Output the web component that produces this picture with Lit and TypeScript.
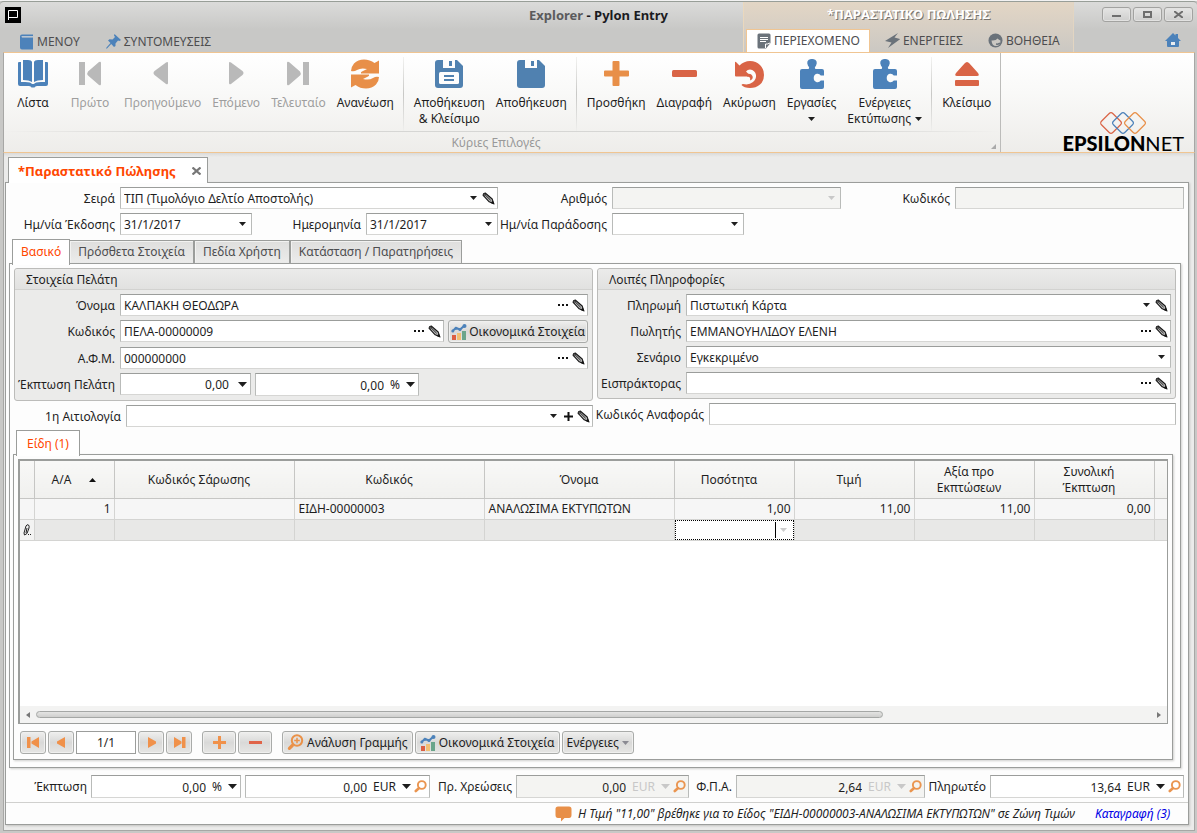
import { LitElement, html, svg, css, nothing } from "lit";

const BLUE = "#4c82ba";
const ORANGE = "#e88f48";
const RED = "#d96446";
const GREY = "#b9b9b9";
const SLATE = "#6a727a";

const icon = (w: number, h: number, box: string, body: unknown) =>
  html`<svg width=${w} height=${h} viewBox=${box} aria-hidden="true">${body}</svg>`;

const puzzle = svg`<path fill=${BLUE} d="M2 12q0-2 2-2h6.5q1.500-1.200-.5-3.200q-2.500-5.800 3-6.800h2q5.500 1 3 6.800q-2 2-.5 3.200H24q2 0 2 2v4.500h-3.200q-1.500-2.200-4-1.700a4.400 4.400 0 0 0 0 8.400q2.500.5 4-1.700H26V28q0 2-2 2H4q-2 0-2-2z"/>`;
const floppyTop = svg`<path fill="#5081b0" d="M4 1H23L29 7V26Q29 29 26 29H4Q1 29 1 26V4Q1 1 4 1Z"/><path fill="#fdfdfd" d="M9 0H21V9H9Z"/><path fill="#5081b0" d="M15 2H18V7H15Z"/>`;
const arrowArc = "M1 12Q1 8 4 4.500Q8 .5 14 .5Q20 .5 24.500 4L29 1.500V14.500H11Q10.500 13 12 12.500L17 10Q11 8.500 7 11Q4 13 1 12Z";

const big: Record<string, unknown> = {
  book: icon(32, 30, "0 0 32 30", svg`<g fill=${BLUE}><path d="M6 1H11Q14.500 1 15 3V23Q12 21 6 21Z"/><path d="M26 1H21Q17.500 1 17 3V23Q20 21 26 21Z"/><path d="M1 4Q1 3 2 3H4V23H8Q14 23 15 25H17Q18 23 24 23H28V3H30Q31 3 31 4V25Q31 27 29 27H20Q18 27 17.500 28.500H14.500Q14 27 12 27H3Q1 27 1 25Z"/></g>`),
  first: icon(30, 30, "0 0 30 30", svg`<path fill=${GREY} d="M4 3H10V26H4ZM26 4V25Q26 27 24 26L13 16.500Q11.500 14.500 13 12.500L24 3Q26 2 26 4Z"/>`),
  prev: icon(30, 30, "0 0 30 30", svg`<path fill=${GREY} d="M20 4V24Q20 26 18 25L6.500 16Q4.500 14 6.500 12L18 3.500Q20 2.500 20 4Z"/>`),
  next: icon(30, 30, "0 0 30 30", svg`<path fill=${GREY} d="M8 4V24Q8 26 10 25L21.500 16Q23.500 14 21.500 12L10 3.500Q8 2.500 8 4Z"/>`),
  last: icon(30, 30, "0 0 30 30", svg`<path fill=${GREY} d="M26 3H20V26H26ZM4 4V25Q4 27 6 26L17 16.500Q18.500 14.500 17 12.500L6 3Q4 2 4 4Z"/>`),
  refresh: icon(30, 30, "0 0 30 30", svg`<g fill=${ORANGE}><path d=${arrowArc}/><path transform="rotate(180 15 15)" d=${arrowArc}/></g>`),
  saveClose: icon(30, 30, "0 0 30 30", svg`${floppyTop}<rect x="5" y="13" width="20" height="12" rx="1.500" fill="#fdfdfd"/><path stroke="#5081b0" stroke-width="2" d="M10 17H20M10 21H20"/>`),
  save: icon(30, 30, "0 0 30 30", floppyTop),
  plus: icon(30, 30, "0 0 30 30", svg`<path fill=${ORANGE} d="M12.500 2H17.500Q18.500 2 18.500 3V11.500H27Q28 11.500 28 12.500V16.500Q28 17.500 27 17.500H18.500V26Q18.500 27 17.500 27H12.500Q11.500 27 11.500 26V17.500H4Q3 17.500 3 16.500V12.500Q3 11.500 4 11.500H11.500V3Q11.500 2 12.500 2Z"/>`),
  minus: icon(30, 30, "0 0 30 30", svg`<rect x="3" y="11" width="25" height="7" rx="1.500" fill=${RED}/>`),
  undo: icon(30, 30, "0 0 30 30", svg`<path fill=${RED} d="M1 3.500Q1 2.500 2 3L5.500 6.500Q10 2 16 2Q22 2 26 6Q30 10 30 16Q30 22 26 25.500Q22 29 16 29Q10 29 7.500 26Q8 25 9 25Q15 26.500 19 23Q22.500 20 22 16Q21 11 16 10.500Q13.500 10.500 12 12.500L15.500 16Q16 17 14.500 17.500H2Q1 17.500 1 16.500Z"/><path fill=${RED} d="M13 15Q17 14 18.500 17Q19.500 20 16 21.500Q17 17.500 13 17.500Z"/>`),
  puzzle: icon(28, 30, "0 0 28 30", puzzle),
  eject: icon(30, 30, "0 0 30 30", svg`<g fill=${RED}><path d="M4 14L12.500 4.500Q15 1.500 17.500 4.500L26 14Q28 17 25 17H5Q2 17 4 14Z"/><rect x="3" y="21" width="24" height="6" rx="1"/></g>`),
};

const caret = (cls = "") =>
  html`<svg class="caret ${cls}" width="7" height="4" viewBox="0 0 7 4" aria-hidden="true"><path fill="currentColor" d="M0 0H7L3.500 4Z"/></svg>`;
const bigCaret = html`<svg width="9" height="5" viewBox="0 0 9 5" aria-hidden="true"><path fill="currentColor" d="M0 0H9L4.500 5Z"/></svg>`;
const pencil = icon(13, 13, "0 0 13 13", svg`<path fill="#b5b5b5" stroke="#161616" stroke-width="1.100" stroke-linejoin="round" d="M1 3.200Q1.200 1.300 3.200 1L10.200 7L11.800 11.800L7.200 9.800Z"/><path stroke="#161616" stroke-width=".9" d="M2.600 2.300L8.600 8.200M1.600 3.800L4 1.700"/><path fill="#161616" d="M8.600 11L10.800 8.400L12.500 12.500Z"/>`);
const dots = icon(11, 3, "0 0 11 3", svg`<path fill="#111" d="M0 0H2V2H0ZM4 0H6V2H4ZM8 0H10V2H8Z"/>`);
const addMark = icon(9, 9, "0 0 9 9", svg`<path fill="#111" d="M3.500 0H5.500V3.500H9V5.500H5.500V9H3.500V5.500H0V3.500H3.500Z"/>`);
const lens = icon(13, 13, "0 0 13 13", svg`<circle cx="7.800" cy="5" r="3.900" fill="none" stroke="#ea9550" stroke-width="1.900"/><path stroke="#ea9550" stroke-width="2.600" stroke-linecap="round" d="M4.800 8.200L1.800 11"/>`);
const chart = icon(16, 16, "0 0 16 16", svg`<path fill="#dc5f43" d="M1 11H5V16H1Z"/><path fill="#f2bf73" d="M6 9H10V16H6Z"/><path fill="#6aa58b" d="M11 7H15V16H11Z"/><path fill="none" stroke="#4c82ba" stroke-width="2" d="M1.500 7L5 4L9 5.500L13 2"/><circle cx="13.500" cy="2" r="2" fill="#4c82ba"/><circle cx="5" cy="4.300" r="1.500" fill="#4c82ba"/><circle cx="1.800" cy="7" r="1.500" fill="#4c82ba"/><circle cx="9" cy="5.500" r="1.500" fill="#4c82ba"/>`);
const zoomLine = icon(17, 17, "0 0 17 17", svg`<circle cx="10" cy="6.500" r="5.200" fill="none" stroke="#ea9148" stroke-width="2"/><path stroke="#ea9148" stroke-width="1.500" d="M10 3.700V9.300M7.200 6.500H12.800"/><path stroke="#ea9148" stroke-width="3.200" stroke-linecap="round" d="M5.300 11.500L2.400 14.400"/>`);

const nav = {
  first: icon(13, 13, "0 0 13 13", svg`<path fill="#f0914a" d="M0 1H3.500V12H0ZM12 1V12L4.500 7.500V5.500Z"/>`),
  prev: icon(13, 13, "0 0 13 13", svg`<path fill="#f0914a" d="M10 1V12L2 7.500V5.500Z"/>`),
  next: icon(13, 13, "0 0 13 13", svg`<path fill="#f0914a" d="M3 1V12L11 7.500V5.500Z"/>`),
  last: icon(13, 13, "0 0 13 13", svg`<path fill="#f0914a" d="M12.500 1H9V12H12.500ZM1 1V12L8.500 7.500V5.500Z"/>`),
  add: icon(13, 13, "0 0 13 13", svg`<path fill="#f0914a" d="M5 0H8V5H13V8H8V13H5V8H0V5H5Z"/>`),
  remove: icon(13, 13, "0 0 13 13", svg`<path fill="#e06448" d="M0 5H13V8H0Z"/>`),
};

type RibbonItem = { lines: string[]; glyph: string; disabled?: boolean; menu?: boolean };
const ribbon: RibbonItem[][] = [
  [
    { lines: ["Λίστα"], glyph: "book" },
    { lines: ["Πρώτο"], glyph: "first", disabled: true },
    { lines: ["Προηγούμενο"], glyph: "prev", disabled: true },
    { lines: ["Επόμενο"], glyph: "next", disabled: true },
    { lines: ["Τελευταίο"], glyph: "last", disabled: true },
    { lines: ["Ανανέωση"], glyph: "refresh" },
  ],
  [
    { lines: ["Αποθήκευση", "& Κλείσιμο"], glyph: "saveClose" },
    { lines: ["Αποθήκευση"], glyph: "save" },
  ],
  [
    { lines: ["Προσθήκη"], glyph: "plus" },
    { lines: ["Διαγραφή"], glyph: "minus" },
    { lines: ["Ακύρωση"], glyph: "undo" },
    { lines: ["Εργασίες", ""], glyph: "puzzle", menu: true },
    { lines: ["Ενέργειες", "Εκτύπωσης"], glyph: "puzzle", menu: true },
  ],
  [{ lines: ["Κλείσιμο"], glyph: "eject" }],
];

const columns = ["Α/Α", "Κωδικός Σάρωσης", "Κωδικός", "Όνομα", "Ποσότητα", "Τιμή", "Αξία προ Εκπτώσεων", "Συνολική Έκπτωση"];
const lines = [["1", "", "ΕΙΔΗ-00000003", "ΑΝΑΛΩΣΙΜΑ ΕΚΤΥΠΩΤΩΝ", "1,00", "11,00", "11,00", "0,00"]];
const numeric = new Set([0, 4, 5, 6, 7]);
const filterable = new Set([1, 4, 5, 6, 7]);

type FieldOptions = { tools?: unknown; suffix?: string; disabled?: boolean; number?: boolean; cls?: string };

class AppRoot extends LitElement {
  static styles = css`
    :host {
      display: block;
      font: 12px/16px "Noto Sans", "DejaVu Sans", sans-serif;
      color: #1e1e1e;
    }
    * { box-sizing: border-box; }
    svg { display: block; flex: none; }
    button, input, select { font: inherit; color: inherit; margin: 0; padding: 0; border: 0; background: none; border-radius: 0; }
    button { cursor: default; }
    a { color: inherit; text-decoration: none; }

    .window {
      display: flex;
      flex-direction: column;
      min-height: 100vh;
      padding: 0 2px 2px 3px;
      background: #c8c8c6;
      border-top: 1px solid #f2f2f2;
    }
    .title-bar {
      display: flex;
      height: 51px;
      margin: 0 -2px 0 -3px;
      padding: 0 4px;
      border-top: 1px solid #989e98;
      border-radius: 4px 4px 0 0;
      background: linear-gradient(#dbdbda, #c8c8c6 55%);
    }
    .title-main { flex: 1; display: flex; flex-direction: column; justify-content: space-between; }
    .title-row { display: flex; justify-content: space-between; align-items: center; height: 26px; padding: 0 75px 0 1px; }
    .title { font-size: 13px; font-weight: bold; color: #1b1b1f; }
    .title-app { color: #5b5b5d; }
    .tab-row { display: flex; align-items: center; height: 22px; color: #4d4d4f; padding-top: 1px; }
    .ribbon-link { display: flex; align-items: center; gap: 3px; white-space: nowrap; height: 22px; }
    .left-links { padding-left: 15px; gap: 26px; }
    .context { width: 331px; display: flex; flex-direction: column; justify-content: space-between; background: linear-gradient(#e3d6c5, #cbc8c3); border-left: 1px solid #ead8bd; border-right: 1px solid #e2d5c2; }
    .context-title { height: 24px; line-height: 24px; text-align: center; color: #fff; font-size: 13px; font-weight: bold; text-shadow: 1px 1px 0 #77746f; }
    .context .tab-row { padding-left: 2px; height: 24px; }
    .active-link { background: #fff; border: 1px solid #f0c592; border-bottom: 0; height: 24px; padding: 0 9px 0 10px; margin-right: 15px; }
    .active-link + .ribbon-link { margin-right: 25px; }
    .window-tools { width: 119px; display: flex; flex-direction: column; justify-content: space-between; align-items: flex-end; padding-top: 5px; }
    .window-buttons { display: flex; gap: 2px; }
    .window-buttons button { width: 29px; height: 15px; border: 1px solid #a2a2a0; border-radius: 3px; background: linear-gradient(#e5e5e4, #cececd); display: grid; place-items: center; box-shadow: inset 0 0 0 1px #e2e2e1; }
    .home { padding: 0 12px 4px 0; }

    .ribbon { display: flex; height: 101px; border: 1px solid #f0c592; border-left-color: #a7a7a5; border-right-color: #a7a7a5; background: linear-gradient(#fff, #f9f9f8 40%, #eeedea); justify-content: space-between; }
    .ribbon-main { flex: 0 1 997px; display: flex; flex-direction: column; border-right: 1px solid #bcbcba; }
    .ribbon-groups { display: flex; height: 78px; padding: 4px 0 0 1px; }
    .ribbon-group { display: flex; gap: 1px; }
    .ribbon-group + .ribbon-group { border-left: 1px solid; border-image: linear-gradient(#f4f4f2, #c8c8c6, #f0f0ee) 1; padding-left: 5px; }
    .ribbon-group:not(:last-child) { padding-right: 4px; }
    .ribbon-button { display: flex; flex-direction: column; align-items: center; min-width: 56px; padding: 2px 5px 0; white-space: nowrap; text-align: center; }
    .ribbon-button svg { margin-bottom: 6px; }
    .ribbon-button .line { display: flex; align-items: center; justify-content: center; gap: 4px; height: 16px; }
    .ribbon-button .line svg { margin: 0; }
    .ribbon-button:disabled { color: #9e9e9e; }
    .ribbon-caption { flex: 1; display: grid; grid-template-columns: 1fr auto 1fr; align-items: center; padding: 2px 4px 0 0; color: #999; border-top: 1px solid; border-image: linear-gradient(90deg, transparent, #d6d6d4 15%, #d6d6d4 85%, transparent) 1; }
    .ribbon-caption svg { justify-self: end; margin-top: 6px; }
    .caption-text { margin-right: 8px; grid-column: 2; }
    .brand { display: flex; flex-direction: column; align-items: center; justify-content: flex-end; padding-right: 10px; }
    .brand-name { font: 900 20px/17px "Lato", sans-serif; color: #000; }
    .brand-light { font-weight: 400; }

    .workspace { flex: 1; display: flex; flex-direction: column; background: linear-gradient(#dadad9, #ebebea 4px); padding: 4px 5px 5px 1px; border: 1px solid #a7a7a5; border-top: 0; }
    .doc-tabs { display: flex; padding-left: 3px; }
    .doc-tab { display: flex; align-items: center; justify-content: space-between; width: 200px; height: 26px; padding: 0 6px 0 9px; background: #fff; border: 1px solid #9b9d9b; border-bottom: 0; margin-bottom: -1px; color: #ff4700; font-size: 13px; font-weight: bold; z-index: 1; }
    .document { flex: 1; display: flex; flex-direction: column; background: #fdfdfd; border: 1px solid #9b9d9b; box-shadow: 1px 1px 2px #c4c4c2; padding: 4px 0 0; }

    .head-grid { display: grid; grid-template-columns: 109px 132fr 104px 132fr 104px 132fr 92fr 104px 229fr; gap: 4px 5px; padding-right: 4px; }
    label { display: flex; align-items: center; justify-content: flex-end; text-align: right; white-space: nowrap; padding-top: 1px; }
    .span-3 { grid-column: span 3; }
    .span-2 { grid-column: span 2; }
    .field { display: flex; align-items: center; min-width: 0; height: 22px; background: #fff; border: 1px solid #b9bbb9; border-top-color: #9b9d9b; border-bottom-color: #d6d6d4; padding: 0 1px 0 3px; }
    .field input, .field select { flex: 1; min-width: 0; width: 100%; height: 20px; outline: none; appearance: none; opacity: 1; padding-top: 1px; }
    .field .number { text-align: right; }
    .field.off { background: #f4f4f2; }
    .field.off .suffix, .field.off .caret-button { color: #c8c8c8; }
    .suffix { margin-left: 6px; padding-top: 1px; }
    .field button { display: grid; place-items: center; height: 20px; min-width: 15px; }
    .caret { margin: 0 4px; pointer-events: none; }
    .field .caret-button { min-width: 14px; margin-left: 3px; }
    .field.tall { height: 23px; }

    .tabs { display: flex; align-items: flex-end; padding-left: 6px; margin-top: 4px; }
    .tab { height: 24px; padding: 0 8px; border: 1px solid #9b9d9b; background: linear-gradient(#dededd, #ececeb); color: #4d4d4f; margin-right: -1px; box-shadow: inset 1px 1px 0 #f2f2f1; white-space: nowrap; }
    .tab + .tab + .tab { margin-left: 1px; }
    .tab.active { height: 26px; background: #fff; color: #ff4700; border-bottom: 0; margin-bottom: -1px; padding-bottom: 1px; z-index: 1; box-shadow: none; }
    .panel { flex: 1; display: flex; flex-direction: column; margin: -1px 7px 0 3px; border: 1px solid #9b9d9b; box-shadow: 1px 1px 2px #cfcfcd; padding: 4px 4px 7px 4px; }

    .groups { display: grid; grid-template-columns: 579fr 579fr; column-gap: 4px; align-items: start; }
    .column { display: flex; flex-direction: column; gap: 4px; min-width: 0; }
    .box { background: #ebebea; border: 1px solid #bcbcba; border-radius: 3px; margin: 0; }
    .box-title { height: 21px; line-height: 22px; padding-left: 11px; background: linear-gradient(#ebebea, #e1e1e0); border-bottom: 1px solid #d2d2d0; border-radius: 3px 3px 0 0; margin: 0; font-size: 12px; font-weight: normal; }
    .box-body { display: grid; row-gap: 4px; padding: 4px 4px 4px 0; }
    .row { display: grid; grid-template-columns: 100px 1fr; column-gap: 5px; }
    .box-right .row { grid-template-columns: 83px 1fr; }
    .cells { display: flex; align-items: flex-start; gap: 4px; min-width: 0; }
    .cells .field { flex: 1; }
    .cells .discount { flex: 0 0 131px; }
    .cells .discount-rate { flex: 0 0 164px; }
    .row.reason { grid-template-columns: 107px 1fr; }
    .row.reference { grid-template-columns: 107px 1fr; }
    .push { display: flex; align-items: center; justify-content: center; gap: 3px; height: 23px; padding: 0 4px; border: 1px solid #a9aba9; border-radius: 3px; background: linear-gradient(#efefee, #d9d9d8 50%, #e6e6e4); box-shadow: inset 0 0 0 1px #f0f0ef; white-space: nowrap; }
    .cells .push { padding: 0 2px; gap: 2px; }

    .item-tabs { display: flex; padding-left: 2px; margin-top: 3px; }
    .item-tabs .tab.active { padding: 0 10px; }
    .items { flex: 1; display: flex; flex-direction: column; margin: -1px 3px 0 -1px; border: 1px solid #9b9d9b; box-shadow: 1px 1px 2px #cfcfcd; padding: 4px; gap: 7px; }
    .grid { flex: 1; display: flex; flex-direction: column; border: 1px solid #9b9d9b; border-top-width: 2px; border-left-width: 2px; background: #fff; overflow: hidden; }
    .grid-body { flex: 1; }
    table { width: 100%; border-collapse: collapse; table-layout: fixed; }
    th, td { border-right: 1px solid #d4d4d2; border-bottom: 1px solid #d4d4d2; padding: 1px 3px 0 4px; font-weight: normal; overflow: hidden; white-space: nowrap; }
    th { height: 37px; white-space: normal; background: linear-gradient(#f8f8f7, #f0f0ee); border-color: #c6c6c4; line-height: 16px; padding: 1px 16px 0; }
    th.filterable { padding-right: 26px; }
    td { height: 21px; background: #f6f6f6; }
    th:last-child, td:last-child { border-right: 0; padding: 0; }
    .entry td { background: #e8e8e7; padding: 0; }
    .entry .mark { background: #f3f3f2; }
    .num { text-align: right; }
    .sort { display: flex; align-items: center; justify-content: center; gap: 18px; }
    .c-mark { width: 14px; }
    .c-no { width: 80px; }
    .c-code, .c-name { width: 190px; }
    .c-scan { width: 180px; }
    .c-val { width: 120px; }
    .editor { display: flex; align-items: center; height: 20px; border: 1px dotted #000; background: #fff; color: #ccc; padding-right: 2px; }
    .editor input { flex: 1; min-width: 0; height: 16px; outline: none; text-align: right; color: #1e1e1e; border-right: 1px solid #000; }
    .scroll { display: flex; align-items: center; gap: 6px; height: 17px; padding: 0 6px; background: #f3f3f2; }
    .scroll-track { flex: 1; }
    .scroll-thumb { width: 76%; height: 7px; border: 1px solid #a5a7a5; border-radius: 4px; background: linear-gradient(#e4e4e3, #cfcfcd); }
    .toolbar { display: flex; gap: 2px; padding: 0 0 1px 2px; }
    .nav { width: 26px; padding: 0; }
    .wide { width: 34px; }
    .gap { margin-left: 8px; }
    .page { width: 60px; height: 23px; border: 1px solid #9b9d9b; background: #fff; text-align: center; outline: none; }

    .totals { display: grid; grid-template-columns: 80px 150fr 185fr 78px 173fr 39px 189fr 57px 194fr; column-gap: 4px; padding: 7px 4px 4px 1px; }
    .status { display: flex; align-items: center; justify-content: flex-end; height: 22px; border-top: 1px solid #d0d0ce; font-style: italic; padding: 1px 12px 0 0; }
    .status svg { margin-right: 6px; }
    .message { white-space: nowrap; margin-right: 7px; min-width: 510px; }
    .log { color: #0000e6; white-space: nowrap; min-width: 81px; }
  `;

  caretButton(name: string, disabled = false) {
    return html`<button class="caret-button" aria-label=${name} ?disabled=${disabled}>${caret()}</button>`;
  }

  edit() {
    return html`<button aria-label="Επεξεργασία">${pencil}</button>`;
  }

  browse() {
    return html`<button aria-label="Αναζήτηση">${dots}</button>${this.edit()}`;
  }

  field(id: string, value: string, o: FieldOptions = {}) {
    return html`<div class="field ${o.cls ?? ""} ${o.disabled ? "off" : ""}">
      <input id=${id} class=${o.number ? "number" : "plain"} .value=${value} ?readonly=${!!o.disabled} autocomplete="off" />
      ${o.suffix ? html`<span class="suffix">${o.suffix}</span>` : nothing}${o.tools ?? nothing}
    </div>`;
  }

  choice(id: string, value: string, tools: unknown = nothing, cls = "") {
    return html`<div class="field ${cls}">
      <select id=${id}><option>${value}</option></select>${caret()}${tools}
    </div>`;
  }

  amountTools(money: boolean, disabled = false) {
    return html`<button class="caret-button" aria-label="Υπολογισμός" ?disabled=${disabled}>${bigCaret}</button>${money
      ? html`<button aria-label="Ανάλυση">${lens}</button>`
      : nothing}`;
  }

  renderTitleBar() {
    return html`<header class="title-bar">
      <div class="title-main">
        <div class="title-row">
          ${icon(16, 16, "0 0 16 16", svg`<path fill="#000" d="M0 0H16V16H0Z"/><path fill="none" stroke="#fff" d="M3.500 13V3.500H12.500V10.500H4"/>`)}
          <div class="title"><span class="title-app">Explorer</span> - Pylon Entry</div>
        </div>
        <nav class="tab-row left-links">
          <a class="ribbon-link" href="#menu">${icon(15, 16, "0 0 15 16", svg`<path fill="#4c82ba" d="M3 0.500H14V2H3V3.500H14V15.500H3Q1 15.500 1 13.500V2.500Q1 .5 3 .5Z"/><path stroke="#b6c6d8" d="M2.500 2.700H13.500"/>`)}ΜΕΝΟΥ</a>
          <a class="ribbon-link" href="#shortcuts">${icon(15, 15, "0 0 15 15", svg`<path fill="#4c82ba" d="M8.500 0L15 6L13.500 7L12 6.500L9.500 9.500V12L8 13L5.200 10L1 14.500H0L.5 13.500L4.500 9L2 6.500L3.500 5.200L6.500 5.500L9 3L8 1.500Z"/>`)}ΣΥΝΤΟΜΕΥΣΕΙΣ</a>
        </nav>
      </div>
      <div class="context">
        <div class="context-title">*ΠΑΡΑΣΤΑΤΙΚΟ ΠΩΛΗΣΗΣ</div>
        <nav class="tab-row">
          <a class="ribbon-link active-link" href="#content">${icon(14, 16, "0 0 14 16", svg`<path fill=${SLATE} d="M2 .5H12Q13.500 .5 13.500 2V10L9 15.500H2Q.5 15.500 .5 14V2Q.5 .5 2 .5Z"/><path stroke="#fff" d="M3 4.500H11M3 6.500H11M3 8.500H9"/><path fill="none" stroke="#fff" d="M8.500 15V11Q10 11.500 13 10"/>`)}ΠΕΡΙΕΧΟΜΕΝΟ</a>
          <a class="ribbon-link" href="#actions">${icon(15, 15, "0 0 15 15", svg`<path fill=${SLATE} d="M13 0L9.500 4.500L15.500 6L3 15L6.500 9.500L0 8Z"/>`)}ΕΝΕΡΓΕΙΕΣ</a>
          <a class="ribbon-link" href="#help">${icon(15, 15, "0 0 15 15", svg`<circle cx="7.500" cy="7.500" r="7" fill=${SLATE}/><path fill="#cbc8c3" d="M3.500 7.500Q8 8 9.500 5.500Q11 7 12.500 7.500Q12.500 13 8 13Q4 13 3.500 7.500Z"/><path fill="none" stroke=${SLATE} stroke-width="1.500" d="M12 10Q11 11.500 8 11"/>`)}ΒΟΗΘΕΙΑ</a>
        </nav>
      </div>
      <div class="window-tools">
        <div class="window-buttons">
          <button aria-label="Ελαχιστοποίηση">${icon(9, 7, "0 0 9 7", svg`<path fill="#6e6e6e" d="M0 4H9V6H0Z"/>`)}</button>
          <button aria-label="Μεγιστοποίηση">${icon(9, 7, "0 0 9 7", svg`<path fill="none" stroke="#6e6e6e" stroke-width="2" d="M1 1H8V6H1Z"/>`)}</button>
          <button aria-label="Κλείσιμο παραθύρου">${icon(9, 7, "0 0 9 7", svg`<path stroke="#6e6e6e" stroke-width="2" d="M0 0L9 7M9 0L0 7"/>`)}</button>
        </div>
        <a class="home" href="#home" aria-label="Αρχική">${icon(16, 15, "0 0 16 15", svg`<path fill="#4c82ba" d="M8 0L10.500 2.500V1H13V5L16 8H14V13Q14 14 13 14H3Q2 14 2 13V8H0Z"/><path fill="#e8ecf0" d="M6 9H10V12H6Z"/>`)}</a>
      </div>
    </header>`;
  }

  renderRibbonButton(item: RibbonItem) {
    const last = item.lines.length - 1;
    return html`<button class="ribbon-button" ?disabled=${!!item.disabled}>
      ${big[item.glyph]}${item.lines.map(
        (text, i) => html`<span class="line">${text}${item.menu && i === last ? caret("menu") : nothing}</span>`,
      )}
    </button>`;
  }

  renderRibbon() {
    return html`<section class="ribbon">
      <div class="ribbon-main">
        <div class="ribbon-groups">
          ${ribbon.map((group) => html`<div class="ribbon-group">${group.map((item) => this.renderRibbonButton(item))}</div>`)}
        </div>
        <div class="ribbon-caption">
          <span class="caption-text">Κύριες Επιλογές</span>
          ${icon(5, 5, "0 0 5 5", svg`<path fill="#aaa" d="M5 0V5H0Z"/>`)}
        </div>
      </div>
      <div class="brand">
        ${icon(48, 24, "0 0 48 24", svg`<g fill="none" stroke-width="1.200"><rect x="4" y="4" width="16" height="16" rx="2.500" transform="rotate(45 12 12)" stroke="#d96446"/><rect x="16" y="4" width="16" height="16" rx="2.500" transform="rotate(45 24 12)" stroke="#4c82ba"/><rect x="28" y="4" width="16" height="16" rx="2.500" transform="rotate(45 36 12)" stroke="#e88f48"/></g>`)}
        <div class="brand-name">EPSILON<span class="brand-light">NET</span></div>
      </div>
    </section>`;
  }

  renderHead() {
    return html`<div class="head-grid">
      <label for="series">Σειρά</label>
      ${this.choice("series", "ΤΙΠ (Τιμολόγιο Δελτίο Αποστολής)", this.edit(), "span-3")}
      <label for="number">Αριθμός</label>
      ${this.field("number", "", { disabled: true, cls: "span-2", tools: this.caretButton("Επιλογή αριθμού", true) })}
      <label for="code">Κωδικός</label>
      ${this.field("code", "", { disabled: true })}
      <label for="issued">Ημ/νία Έκδοσης</label>
      ${this.field("issued", "31/1/2017", { tools: this.caretButton("Ημερολόγιο") })}
      <label for="date">Ημερομηνία</label>
      ${this.field("date", "31/1/2017", { tools: this.caretButton("Ημερολόγιο") })}
      <label for="delivery">Ημ/νία Παράδοσης</label>
      ${this.field("delivery", "", { tools: this.caretButton("Ημερολόγιο") })}
    </div>`;
  }

  renderBoxes() {
    return html`<div class="groups">
      <div class="column">
        <section class="box">
          <h2 class="box-title">Στοιχεία Πελάτη</h2>
          <div class="box-body">
            <div class="row"><label for="name">Όνομα</label>${this.field("name", "ΚΑΛΠΑΚΗ ΘΕΟΔΩΡΑ", { tools: this.browse() })}</div>
            <div class="row">
              <label for="customer">Κωδικός</label>
              <div class="cells">
                ${this.field("customer", "ΠΕΛΑ-00000009", { tools: this.browse() })}
                <button class="push">${chart}Οικονομικά Στοιχεία</button>
              </div>
            </div>
            <div class="row"><label for="vat">Α.Φ.Μ.</label>${this.field("vat", "000000000", { tools: this.browse() })}</div>
            <div class="row">
              <label for="discount">Έκπτωση Πελάτη</label>
              <div class="cells">
                ${this.field("discount", "0,00", { number: true, cls: "discount", tools: html`<span>&nbsp;</span>${this.amountTools(false)}` })}
                ${this.field("discount-rate", "0,00", { number: true, suffix: "%", cls: "discount-rate tall", tools: this.amountTools(false) })}
              </div>
            </div>
          </div>
        </section>
        <div class="row reason">
          <label for="reason">1η Αιτιολογία</label>
          ${this.choice("reason", "", html`<button aria-label="Προσθήκη">${addMark}</button>${this.edit()}`)}
        </div>
      </div>
      <div class="column">
        <section class="box box-right">
          <h2 class="box-title">Λοιπές Πληροφορίες</h2>
          <div class="box-body">
            <div class="row"><label for="payment">Πληρωμή</label>${this.choice("payment", "Πιστωτική Κάρτα", this.edit())}</div>
            <div class="row"><label for="seller">Πωλητής</label>${this.field("seller", "ΕΜΜΑΝΟΥΗΛΙΔΟΥ ΕΛΕΝΗ", { tools: this.browse() })}</div>
            <div class="row"><label for="scenario">Σενάριο</label>${this.choice("scenario", "Εγκεκριμένο")}</div>
            <div class="row"><label for="collector">Εισπράκτορας</label>${this.field("collector", "", { tools: this.browse() })}</div>
          </div>
        </section>
        <div class="row reference"><label for="reference">Κωδικός Αναφοράς</label>${this.field("reference", "")}</div>
      </div>
    </div>`;
  }

  renderTable() {
    const widths = ["c-no", "c-scan", "c-code", "c-name", "c-val", "c-val", "c-val", "c-val"];
    return html`<div class="grid">
      <div class="grid-body">
        <table>
          <colgroup><col class="c-mark" />${widths.map((w) => html`<col class=${w} />`)}<col /></colgroup>
          <thead>
            <tr>
              <th></th>
              ${columns.map((name, i) => i === 0
                ? html`<th><span class="sort">${name}<svg width="7" height="4" viewBox="0 0 7 4" aria-hidden="true"><path fill="#111" d="M0 4H7L3.500 0Z"/></svg></span></th>`
                : html`<th class=${filterable.has(i) ? "filterable" : "plain"}>${name}</th>`)}
              <th></th>
            </tr>
          </thead>
          <tbody>
            ${lines.map((line) => html`<tr><td></td>${line.map((cell, i) => html`<td class=${numeric.has(i) ? "num" : "text"}>${cell}</td>`)}<td></td></tr>`)}
            <tr class="entry">
              <td class="mark">${icon(14, 13, "1 0 14 13", svg`<path fill="none" stroke="#222" stroke-width="1" d="M5 10L7 3Q8 1 9.500 2Q10.500 3 10 5L8 10.500L5.500 12L5 10M8 5L7 10"/><path fill="#222" d="M9 11H10V12H9ZM11 11H12V12H11Z"/>`)}</td>
              ${columns.map((name, i) => i === 4
                ? html`<td><div class="editor"><input aria-label=${name} /><button aria-label="Υπολογισμός">${caret()}</button></div></td>`
                : html`<td></td>`)}
              <td></td>
            </tr>
          </tbody>
        </table>
      </div>
      <div class="scroll">
        ${icon(4, 6, "0 0 4 6", svg`<path fill="#777" d="M4 0V6L0 3Z"/>`)}
        <div class="scroll-track"><div class="scroll-thumb"></div></div>
        ${icon(4, 6, "0 0 4 6", svg`<path fill="#777" d="M0 0V6L4 3Z"/>`)}
      </div>
    </div>`;
  }

  renderToolbar() {
    return html`<div class="toolbar">
      <button class="push nav" aria-label="Πρώτη γραμμή">${nav.first}</button>
      <button class="push nav" aria-label="Προηγούμενη γραμμή">${nav.prev}</button>
      <input class="page" aria-label="Γραμμή" .value=${"1/1"} />
      <button class="push nav" aria-label="Επόμενη γραμμή">${nav.next}</button>
      <button class="push nav" aria-label="Τελευταία γραμμή">${nav.last}</button>
      <button class="push wide gap" aria-label="Προσθήκη γραμμής">${nav.add}</button>
      <button class="push wide" aria-label="Διαγραφή γραμμής">${nav.remove}</button>
      <button class="push gap">${zoomLine}Ανάλυση Γραμμής</button>
      <button class="push">${chart}Οικονομικά Στοιχεία</button>
      <button class="push">Ενέργειες<svg width="7" height="4" viewBox="0 0 7 4" aria-hidden="true"><path fill="#8a8a92" d="M0 0H7L3.500 4Z"/></svg></button>
    </div>`;
  }

  renderTotals() {
    const amount = (id: string, value: string, suffix: string, disabled = false) =>
      this.field(id, value, { number: true, suffix, disabled, cls: "tall", tools: this.amountTools(suffix === "EUR", disabled) });
    return html`<div class="totals">
      <label for="total-rate">Έκπτωση</label>${amount("total-rate", "0,00", "%")}
      ${amount("total-discount", "0,00", "EUR")}
      <label for="charges">Πρ. Χρεώσεις</label>${amount("charges", "0,00", "EUR", true)}
      <label for="tax">Φ.Π.Α.</label>${amount("tax", "2,64", "EUR", true)}
      <label for="payable">Πληρωτέο</label>${amount("payable", "13,64", "EUR")}
    </div>`;
  }

  render() {
    return html`<div class="window">
      ${this.renderTitleBar()} ${this.renderRibbon()}
      <main class="workspace">
        <div class="doc-tabs">
          <div class="doc-tab">*Παραστατικό Πώλησης
            <button aria-label="Κλείσιμο καρτέλας">${icon(9, 8, "0 0 9 8", svg`<path stroke="#777" stroke-width="2.200" d="M.5 .5L8.500 7.500M8.500 .5L.5 7.500"/>`)}</button>
          </div>
        </div>
        <div class="document">
          ${this.renderHead()}
          <div class="tabs">
            <button class="tab active">Βασικό</button>
            <button class="tab">Πρόσθετα Στοιχεία</button>
            <button class="tab">Πεδία Χρήστη</button>
            <button class="tab">Κατάσταση / Παρατηρήσεις</button>
          </div>
          <div class="panel">
            ${this.renderBoxes()}
            <div class="item-tabs"><button class="tab active">Είδη (1)</button></div>
            <div class="items">${this.renderTable()} ${this.renderToolbar()}</div>
          </div>
          ${this.renderTotals()}
          <footer class="status">
            ${icon(17, 16, "0 0 17 16", svg`<path fill=${ORANGE} d="M3 .5H14Q16.500 .5 16.500 3V9Q16.500 12 14 12H9.500L6 15.500V12H3Q.5 12 .5 9V3Q.5 .5 3 .5Z"/>`)}
            <span class="message">Η Τιμή "11,00" βρέθηκε για το Είδος "ΕΙΔΗ-00000003-ΑΝΑΛΩΣΙΜΑ ΕΚΤΥΠΩΤΩΝ" σε Ζώνη Τιμών</span>
            <a class="log" href="#log">Καταγραφή (3)</a>
          </footer>
        </div>
      </main>
    </div>`;
  }
}

customElements.define("app-root", AppRoot);
